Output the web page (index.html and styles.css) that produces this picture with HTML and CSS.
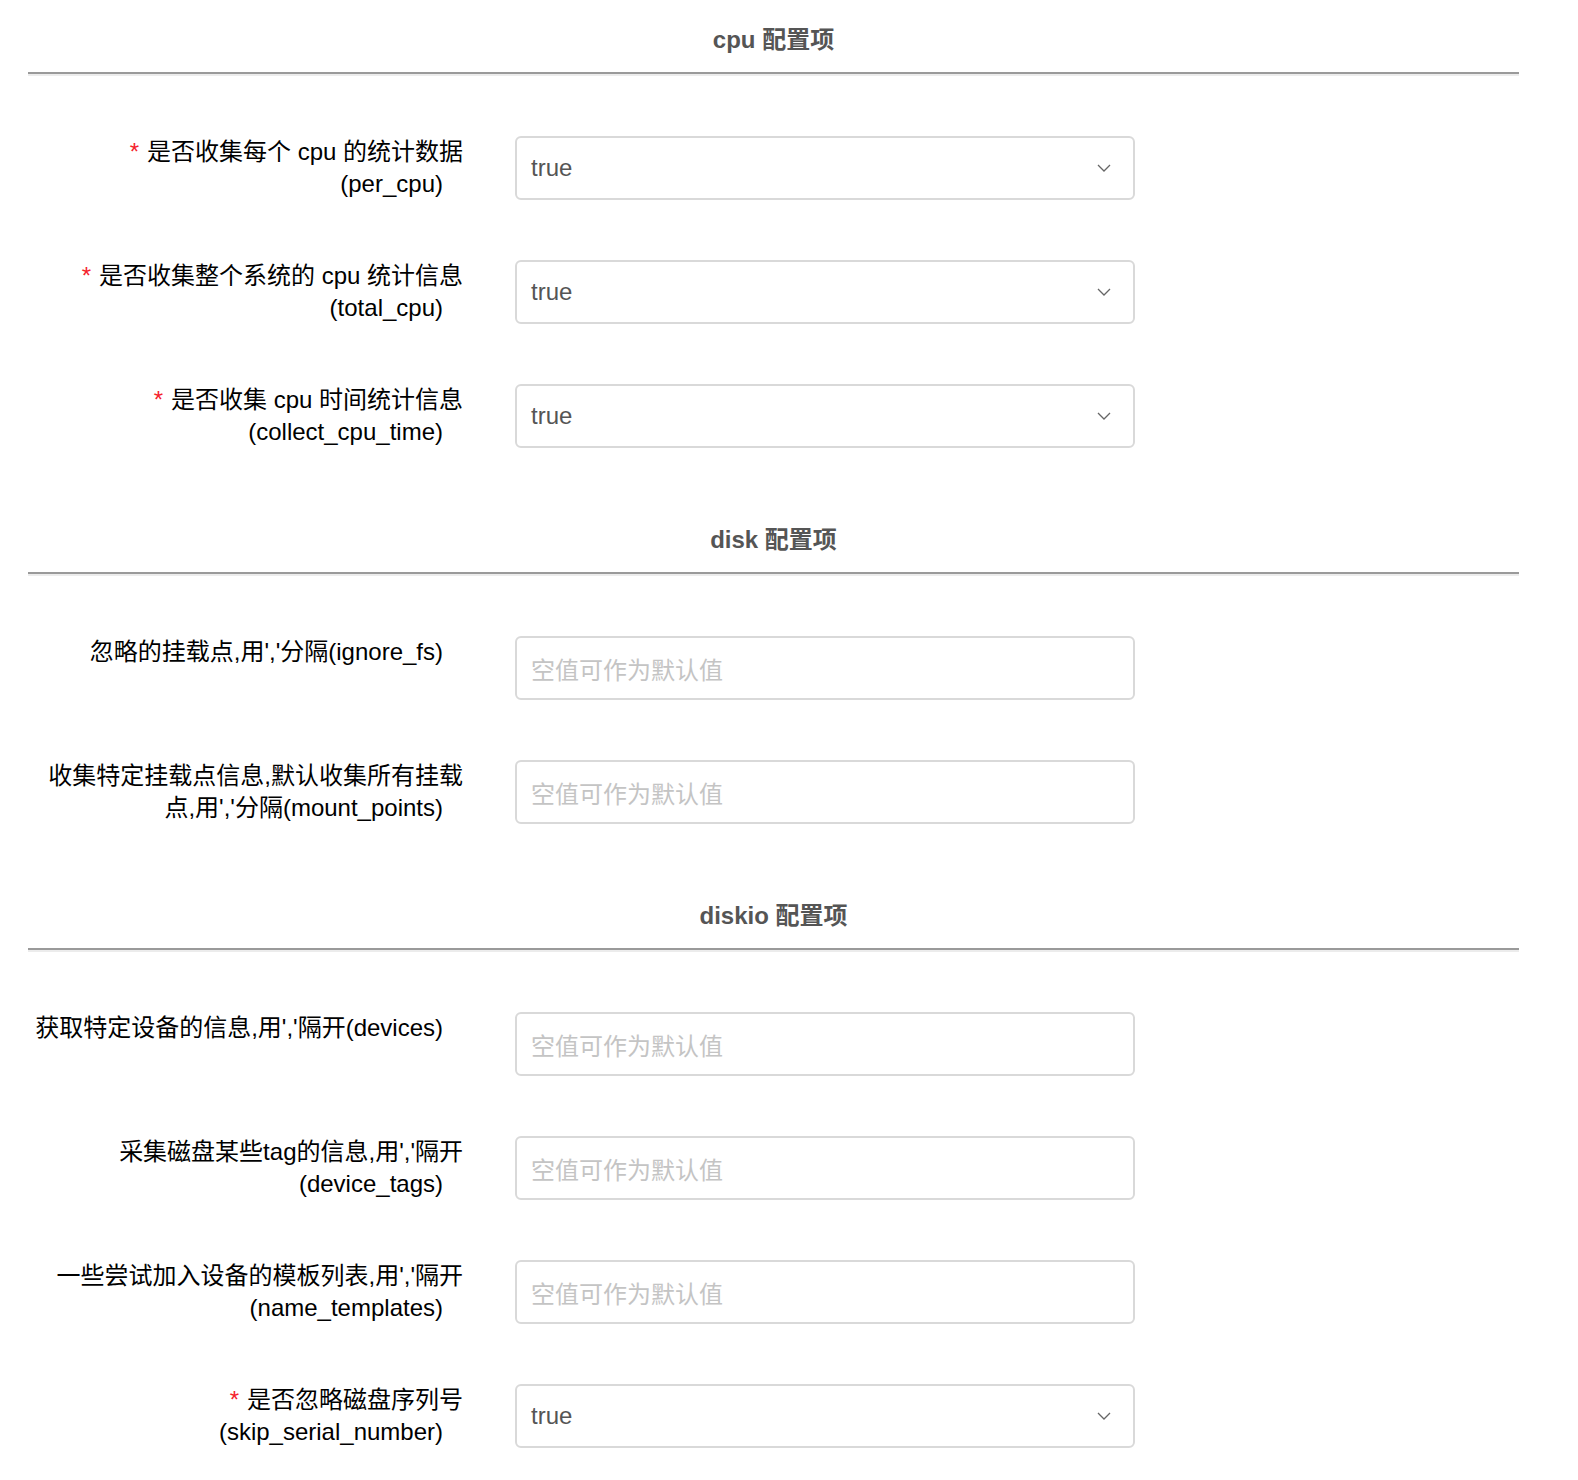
FILE: index.html
```html
<!DOCTYPE html>
<html lang="zh-CN">
<head>
<meta charset="utf-8">
<title>配置项</title>
<link rel="stylesheet" href="styles.css">
</head>
<body>
<div class="page">
  <section class="section">
    <h2 class="section-title">cpu 配置项</h2>
    <div class="divider"></div>
    <div class="row">
      <div class="label"><span class="line"><span class="req">*</span>是否收集每个 cpu 的统计数据</span><span class="line last">(per_cpu)</span></div>
      <div class="control select"><span class="value">true</span><svg class="chev" viewBox="0 0 14 8"><path d="M1 1 L7 7 L13 1"/></svg></div>
    </div>
    <div class="row">
      <div class="label"><span class="line"><span class="req">*</span>是否收集整个系统的 cpu 统计信息</span><span class="line last">(total_cpu)</span></div>
      <div class="control select"><span class="value">true</span><svg class="chev" viewBox="0 0 14 8"><path d="M1 1 L7 7 L13 1"/></svg></div>
    </div>
    <div class="row">
      <div class="label"><span class="line"><span class="req">*</span>是否收集 cpu 时间统计信息</span><span class="line last">(collect_cpu_time)</span></div>
      <div class="control select"><span class="value">true</span><svg class="chev" viewBox="0 0 14 8"><path d="M1 1 L7 7 L13 1"/></svg></div>
    </div>
  </section>

  <section class="section">
    <h2 class="section-title">disk 配置项</h2>
    <div class="divider"></div>
    <div class="row">
      <div class="label"><span class="line last">忽略的挂载点,用','分隔(ignore_fs)</span></div>
      <div class="control"><span class="placeholder">空值可作为默认值</span></div>
    </div>
    <div class="row">
      <div class="label"><span class="line">收集特定挂载点信息,默认收集所有挂载</span><span class="line last">点,用','分隔(mount_points)</span></div>
      <div class="control"><span class="placeholder">空值可作为默认值</span></div>
    </div>
  </section>

  <section class="section">
    <h2 class="section-title">diskio 配置项</h2>
    <div class="divider"></div>
    <div class="row">
      <div class="label"><span class="line last">获取特定设备的信息,用','隔开(devices)</span></div>
      <div class="control"><span class="placeholder">空值可作为默认值</span></div>
    </div>
    <div class="row">
      <div class="label"><span class="line">采集磁盘某些tag的信息,用','隔开</span><span class="line last">(device_tags)</span></div>
      <div class="control"><span class="placeholder">空值可作为默认值</span></div>
    </div>
    <div class="row">
      <div class="label"><span class="line">一些尝试加入设备的模板列表,用','隔开</span><span class="line last">(name_templates)</span></div>
      <div class="control"><span class="placeholder">空值可作为默认值</span></div>
    </div>
    <div class="row">
      <div class="label"><span class="line"><span class="req">*</span>是否忽略磁盘序列号</span><span class="line last">(skip_serial_number)</span></div>
      <div class="control select"><span class="value">true</span><svg class="chev" viewBox="0 0 14 8"><path d="M1 1 L7 7 L13 1"/></svg></div>
    </div>
  </section>
</div>
</body>
</html>
```

FILE: styles.css
```css
html, body {
  margin: 0;
  padding: 0;
  background: #fff;
}

body {
  font-family: "Liberation Sans", "Noto Sans CJK SC", sans-serif;
  font-size: 24px;
  color: #000;
}

.page {
  width: 1491px;
  margin-left: 28px;
  padding-top: 24px;
}

.section {
  margin-bottom: 76px;
}

.section:last-child {
  margin-bottom: 40px;
}

.section-title {
  margin: 0 0 16px;
  font-size: 24px;
  line-height: 32px;
  font-weight: bold;
  text-align: center;
  color: #555;
}

.divider {
  height: 2px;
  background: #9a9a9a;
  border-bottom: 2px solid #ececec;
  margin-bottom: 60px;
}

.row {
  display: flex;
  align-items: flex-start;
  gap: 52px;
  margin-bottom: 60px;
}

.row:last-child {
  margin-bottom: 0;
}

.label {
  width: 435px;
  flex: none;
  display: flex;
  flex-direction: column;
  align-items: flex-end;
  line-height: 32px;
  white-space: nowrap;
}

.line.last {
  margin-right: 20px;
}

.req {
  color: #f5222d;
  margin-right: 8px;
  font-family: "Liberation Sans", sans-serif;
}

.control {
  width: 620px;
  height: 64px;
  box-sizing: border-box;
  border: 2px solid #d9d9d9;
  border-radius: 6px;
  display: flex;
  align-items: center;
  padding: 0 14px;
  flex: none;
}

.value {
  color: #555;
  flex: 1;
}

.placeholder {
  color: #c4c4c4;
}

.chev {
  width: 14px;
  height: 8px;
  margin-right: 8px;
  fill: none;
  stroke: #666;
  stroke-width: 1.3;
}
```
